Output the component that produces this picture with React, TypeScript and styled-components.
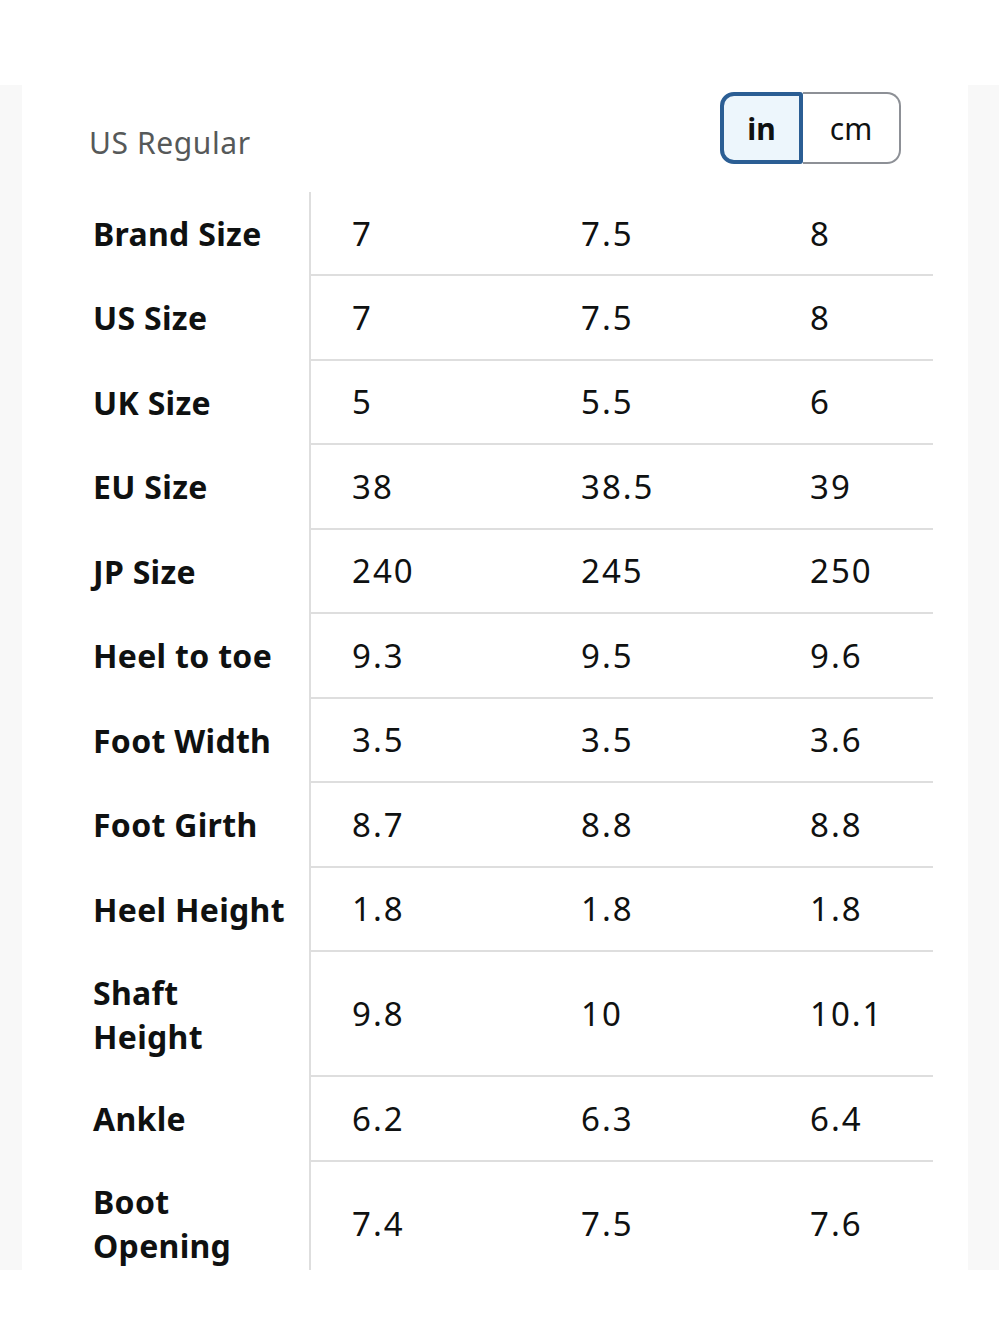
import React from "react";
import styled, { createGlobalStyle } from "styled-components";

const Global = createGlobalStyle`
  html, body { margin: 0; padding: 0; background: #ffffff; }
  body { font-family: "Noto Sans", "Open Sans", sans-serif; color: #111; }
`;

const Page = styled.div`
  width: 999px;
  height: 1333px;
  padding-top: 85px;
  box-sizing: border-box;
  display: flex;
  align-items: flex-start;
`;

const SideStrip = styled.div<{ $w: number }>`
  width: ${(p) => p.$w}px;
  height: 1185px;
  background: #f8f8f8;
  flex: none;
`;

const Card = styled.div`
  flex: 1;
  height: 1185px;
  overflow: hidden;
  background: #fff;
  padding: 7px 0 0 67px;
  box-sizing: border-box;
`;

const Header = styled.div`
  display: flex;
  align-items: flex-end;
  justify-content: space-between;
  width: 812px;
  height: 72px;
`;

const Title = styled.div`
  font-size: 30px;
  letter-spacing: 0.6px;
  color: #565959;
  line-height: 1;
  padding-bottom: 6px;
`;

const Toggle = styled.div`
  display: flex;
  height: 72px;
  align-self: flex-start;
`;

const Seg = styled.div<{ $active?: boolean }>`
  display: flex;
  align-items: center;
  justify-content: center;
  box-sizing: border-box;
  font-size: 30px;
  color: #0f1111;
  ${(p) =>
    p.$active
      ? `
    width: 83px;
    border: 4px solid #2b5e94;
    border-radius: 14px 3px 3px 14px;
    background: #edf6fc;
    font-weight: 700;
  `
      : `
    width: 98px;
    border: 2px solid #8d9096;
    border-left: none;
    border-radius: 0 14px 14px 0;
    background: #fff;
  `}
`;

const Table = styled.div`
  margin-top: 28px;
  display: grid;
  grid-template-columns: 222px 229px 229px 164px;
`;

const LabelCell = styled.div<{ $h: number }>`
  height: ${(p) => p.$h}px;
  display: flex;
  align-items: center;
  padding-left: 4px;
  box-sizing: border-box;
  font-size: 32px;
  font-weight: 700;
  letter-spacing: 0.3px;
  line-height: 44px;
  color: #0f1111;
  border-right: 2px solid #dedede;
`;

const ValueCell = styled.div<{ $h: number }>`
  height: ${(p) => p.$h}px;
  display: flex;
  align-items: center;
  padding-left: 41px;
  box-sizing: border-box;
  font-size: 33px;
  letter-spacing: 2px;
  color: #0f1111;
  border-bottom: 2px solid #dedede;
`;

const rows: { label: React.ReactNode; vals: string[]; h: number }[] = [
  { label: "Brand Size", vals: ["7", "7.5", "8"], h: 84 },
  { label: "US Size", vals: ["7", "7.5", "8"], h: 84.5 },
  { label: "UK Size", vals: ["5", "5.5", "6"], h: 84.5 },
  { label: "EU Size", vals: ["38", "38.5", "39"], h: 84.5 },
  { label: "JP Size", vals: ["240", "245", "250"], h: 84.5 },
  { label: "Heel to toe", vals: ["9.3", "9.5", "9.6"], h: 84.5 },
  { label: "Foot Width", vals: ["3.5", "3.5", "3.6"], h: 84.5 },
  { label: "Foot Girth", vals: ["8.7", "8.8", "8.8"], h: 84.5 },
  { label: "Heel Height", vals: ["1.8", "1.8", "1.8"], h: 84.5 },
  { label: <>Shaft<br />Height</>, vals: ["9.8", "10", "10.1"], h: 125 },
  { label: "Ankle", vals: ["6.2", "6.3", "6.4"], h: 84.5 },
  { label: <>Boot<br />Opening</>, vals: ["7.4", "7.5", "7.6"], h: 125 },
];

export default function App() {
  return (
    <>
      <Global />
      <Page>
        <SideStrip $w={22} />
        <Card>
          <Header>
            <Title>US Regular</Title>
            <Toggle>
              <Seg $active>in</Seg>
              <Seg>cm</Seg>
            </Toggle>
          </Header>
          <Table>
            {rows.map((r, i) => (
              <React.Fragment key={i}>
                <LabelCell $h={r.h}>
                  <span>{r.label}</span>
                </LabelCell>
                {r.vals.map((v, j) => (
                  <ValueCell key={j} $h={r.h}>
                    {v}
                  </ValueCell>
                ))}
              </React.Fragment>
            ))}
          </Table>
        </Card>
        <SideStrip $w={31} />
      </Page>
    </>
  );
}
